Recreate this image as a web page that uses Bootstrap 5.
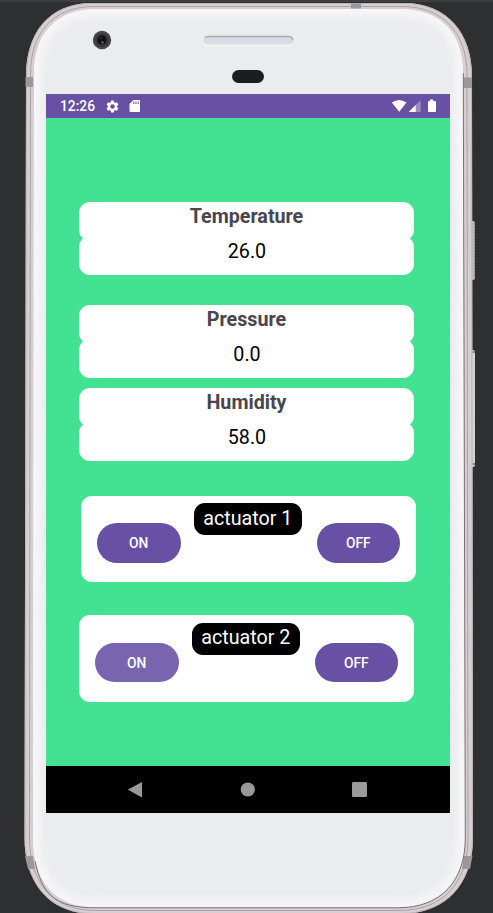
<!DOCTYPE html>
<html lang="en">
<head>
<meta charset="utf-8">
<meta name="viewport" content="width=device-width, initial-scale=1">
<title>Sensor dashboard</title>
<link href="https://cdn.jsdelivr.net/npm/bootstrap@5.3.0/dist/css/bootstrap.min.css" rel="stylesheet">
<style>
  body { background: #2d2f31; font-family: Roboto, sans-serif; }
  .stage { width: 493px; height: 913px; padding: 94px 43px 0 46px; }
  .device { left: 0; top: 0; z-index: 0; }
  .screen { height: 719px; background: #43e293; z-index: 1; }
  .status { height: 24px; background: #6850a4; padding: 0 13px 0 14px; font-size: 13.8px; font-weight: 500; }
  .gear { margin-left: 10px; }
  .sdcard { margin-left: 9px; }
  .content { padding: 84px 36px 0 33px; }
  .reading { margin-bottom: 30px; }
  .reading.tight { margin-bottom: 10px; }
  .pane { height: 39px; border-radius: 11px; background: #fff; }
  .pane-title { font-size: 19.7px; line-height: 30px; font-weight: 700; color: #49454f; }
  .pane-value { font-size: 19.7px; line-height: 31px; color: #000; margin-top: -5px; padding-left: 1px; }
  .actuator { height: 86px; border-radius: 11px; background: #fff; padding: 0 16px; }
  .first { margin: 35px -2px 33px 2px; }
  .second { height: 87px; }
  .tag { width: 108px; height: 32px; line-height: 31px; margin-top: 7.4px; margin-right: 1.5px; border-radius: 11px; background: #000; font-size: 19.7px; color: #fff; }
  .pill { width: 83.5px; height: 39.5px; margin-top: 27px; padding: 0; font-size: 13.8px; font-weight: 500; line-height: 41px;
          --bs-btn-bg: #6850a4; --bs-btn-color: #fff; --bs-btn-border-width: 0; --bs-btn-hover-bg: #7965af; --bs-btn-hover-color: #fff; }
  .pill.pressed { --bs-btn-bg: #7965af; }
  .second .pill { margin-top: 27.5px; }
  .second .tag { margin-top: 8px; line-height: 29px; }
  .softkeys { height: 47px; background: #000; padding: 0 82px 0 81px; }
</style>
</head>
<body class="overflow-hidden">
<main class="stage position-relative">
  <svg class="device position-absolute" width="493" height="913" viewBox="0 0 493 913" aria-hidden="true">
    <defs>
      <clipPath id="face"><path d="M96 9H400C442 9 463 34 463 73L465 838C465 880 442 907.500 398 907.500H96C54 907.500 33 880 33 838L34 73C34 34 56 9 96 9Z"/></clipPath>
      <filter id="soft" x="-5%" y="-5%" width="110%" height="110%"><feGaussianBlur stdDeviation="3"/></filter>
    </defs>
    <rect width="493" height="2" fill="#3c3f41"/>
    <!-- side buttons -->
    <rect x="470" y="221" width="5" height="59" rx="2" fill="#b9b5b7"/>
    <rect x="470" y="350" width="5" height="117" rx="2" fill="#d3d1d0"/>
    <path d="M474.500 223V277" stroke="#8c8c8c" stroke-dasharray="2 1"/>
    <path d="M471 352H475M471 464H475" stroke="#77757a" stroke-width="1.500"/>
    <!-- metal rim -->
    <path d="M92 3H404C448 3 472 34 472 76L473 838C473 884 446 914 400 914H94C50 914 24.500 884 24.500 838L26 76C26 34 48 3 92 3Z" fill="#d6cfd2"/>
    <path d="M92 3.500H404C448 3.500 471.500 34 471.500 76L472.500 838C472.500 884 446 913.500 400 913.500H94C50 913.500 25 884 25 838L26.500 76C26.500 34 48 3.500 92 3.500Z" fill="none" stroke="#bdb5b9"/>
    <path d="M94 6.500H402C444 6.500 467 34 467 74L468 838C468 882 444 910.500 399 910.500H95C52 910.500 29.500 882 29.500 838L30.500 74C30.500 34 52 6.500 94 6.500Z" fill="none" stroke="#aba3a7" stroke-width="1"/>
    <g fill="#9c979a"><path d="M25.500 77H33V87H25.500ZM464 77.500H472V88H464ZM351 3.500H361V8.500H351ZM25 856H33L35 869H28ZM464 856H472.500L470 869H462Z"/></g>
    <path d="M96 9H400C442 9 463 34 463 73L465 838C465 880 442 907.500 398 907.500H96C54 907.500 33 880 33 838L34 73C34 34 56 9 96 9Z" fill="#ebecee"/>
    <g clip-path="url(#face)"><path d="M96 9H400C442 9 463 34 463 73L465 838C465 880 442 907.500 398 907.500H96C54 907.500 33 880 33 838L34 73C34 34 56 9 96 9Z" fill="none" stroke="#f5f5f7" stroke-width="16" filter="url(#soft)"/></g>
    <path d="M463.300 73L465.300 838C465.300 880 442 907.800 398 907.800H96C54 907.800 42 894 35 861" fill="none" stroke="#77727a"/>
    <!-- camera -->
    <circle cx="102" cy="40" r="9.200" fill="#46484c"/><circle cx="102" cy="40" r="7" fill="#37393d"/><circle cx="102" cy="40" r="4.600" fill="#111316"/><circle cx="102.500" cy="42.500" r="1.300" fill="#65642c"/><circle cx="101" cy="38" r="1" fill="#30343b"/>
    <!-- speaker -->
    <rect x="203.500" y="36.500" width="90" height="9" rx="4.500" fill="#f7f8fa"/><rect x="203.500" y="36" width="90" height="8.500" rx="4.200" fill="#d9dce2"/>
    <path d="M205 38Q206 36.500 208 36.500H289Q292 36.500 293 40" fill="none" stroke="#a5acb5" stroke-width="1.300"/>
    <!-- proximity sensor -->
    <rect x="232" y="70" width="32" height="13" rx="6.500" fill="#1b1d22"/>
  </svg>

  <section class="screen position-relative d-flex flex-column">
    <header class="status d-flex align-items-center text-white">
      <span>12:26</span>
      <svg class="gear flex-shrink-0" width="15" height="15" viewBox="0 0 24 24" fill="#fff"><path d="M19.140 12.940c.04-.3.060-.61.060-.94s-.02-.64-.07-.94l2.030-1.580c.18-.14.23-.41.120-.61l-1.920-3.320c-.12-.22-.37-.29-.59-.22l-2.390.960c-.5-.38-1.030-.7-1.620-.94L14.400 2.810c-.04-.24-.24-.41-.48-.41h-3.840c-.24 0-.43.170-.47.410L9.250 5.350c-.59.240-1.130.57-1.620.94L5.240 5.330c-.22-.08-.47 0-.59.220L2.740 8.870c-.12.210-.08.470.120.610l2.030 1.580c-.05.300-.09.630-.09.940s.02.640.070.940l-2.030 1.580c-.18.140-.23.410-.12.610l1.920 3.320c.12.220.37.290.59.220l2.390-.96c.5.380 1.030.7 1.620.94l.36 2.540c.05.240.24.410.48.410h3.840c.24 0 .44-.17.470-.41l.36-2.540c.59-.24 1.130-.56 1.620-.94l2.390.960c.22.080.47 0 .59-.22l1.920-3.320c.12-.22.070-.47-.12-.61zM12 15.600a3.600 3.600 0 1 1 0-7.200 3.600 3.600 0 0 1 0 7.200z"/></svg>
      <svg class="sdcard flex-shrink-0" width="12" height="12" viewBox="0 0 12 12"><path d="M4.300 0H10Q11 0 11 1V11Q11 12 10 12H1.500Q.5 12 .5 11V4Z" fill="#fff"/><path d="M4.800 1.600V4M7 1.600V4M9.200 1.600V4" stroke="#6850a4"/></svg>
      <svg class="flex-shrink-0 ms-auto" width="46" height="14" viewBox="0 0 46 14"><path d="M.8 3.600Q8 -1.400 15.500 3.600L8.200 12.800Z" fill="#fff"/><path d="M29.700 1V13H17.700Z" fill="#9b8ac2"/><path d="M24.700 6V13H17.700Z" fill="#fff"/><path d="M38.800 .5H42.200V2H44Q45 2 45 3V12Q45 13 44 13H38Q37 13 37 12V3Q37 2 38 2H38.800Z" fill="#fff"/></svg>
    </header>

    <div class="content flex-grow-1 text-center">
      <div class="reading">
        <div class="pane pane-title">Temperature</div>
        <div class="pane pane-value">26.0</div>
      </div>
      <div class="reading tight">
        <div class="pane pane-title">Pressure</div>
        <div class="pane pane-value">0.0</div>
      </div>
      <div class="reading tight">
        <div class="pane pane-title">Humidity</div>
        <div class="pane pane-value">58.0</div>
      </div>
      <div class="actuator first d-flex justify-content-between align-items-start">
        <button class="btn pill rounded-pill" type="button">ON</button>
        <div class="tag">actuator 1</div>
        <button class="btn pill rounded-pill" type="button">OFF</button>
      </div>
      <div class="actuator second d-flex justify-content-between align-items-start">
        <button class="btn pill rounded-pill pressed" type="button">ON</button>
        <div class="tag">actuator 2</div>
        <button class="btn pill rounded-pill" type="button">OFF</button>
      </div>
    </div>

    <nav class="softkeys d-flex justify-content-between align-items-center" aria-label="System navigation">
      <svg width="16" height="16" viewBox="0 0 16 16"><path d="M15 .4V15Q15 15.500 14.500 15.200L1.500 8.100Q1 7.700 1.500 7.300L14.500.2Q15 -.1 15 .4Z" fill="#999"/></svg>
      <svg width="16" height="16" viewBox="0 0 16 16"><circle cx="7.800" cy="7.500" r="7.100" fill="#999"/></svg>
      <svg width="16" height="16" viewBox="0 0 16 16"><rect x="0" y="0" width="15" height="15" rx="1.200" fill="#999"/></svg>
    </nav>
  </section>
</main>
<script src="https://cdn.jsdelivr.net/npm/bootstrap@5.3.0/dist/js/bootstrap.bundle.min.js"></script>
</body>
</html>
